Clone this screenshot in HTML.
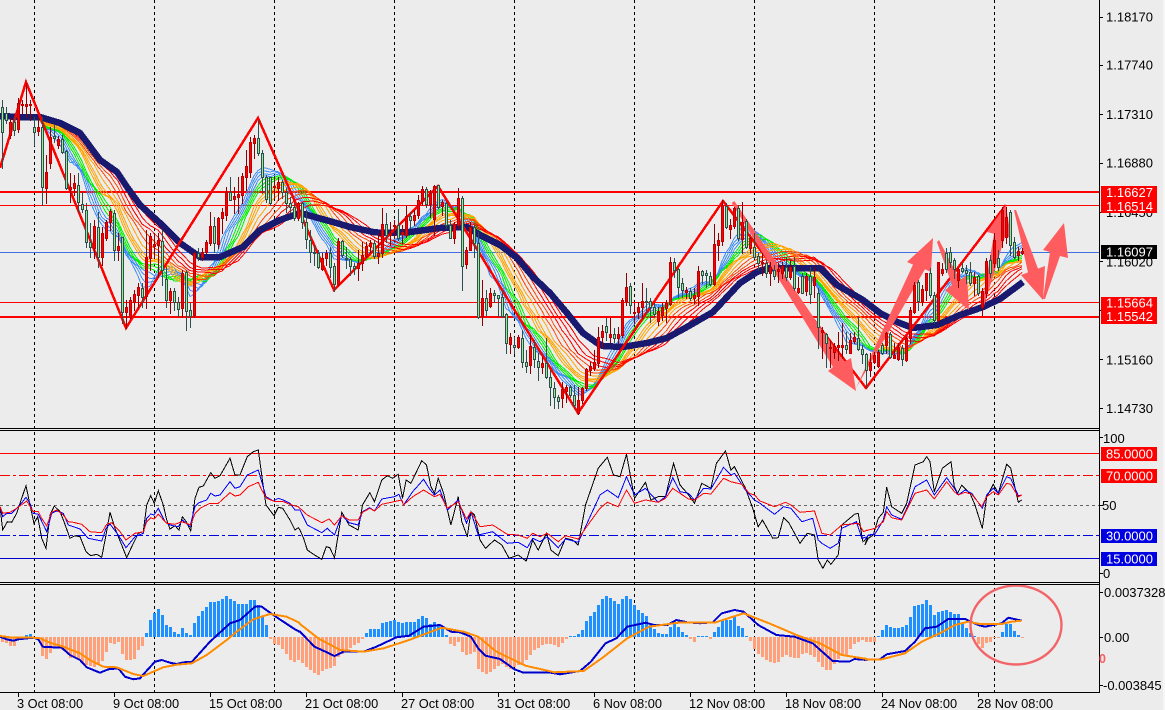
<!DOCTYPE html>
<html><head><meta charset="utf-8"><title>EURUSD chart</title>
<style>
html,body{margin:0;padding:0;background:#ececec;width:1165px;height:710px;overflow:hidden}
svg{display:block;position:absolute;left:0;top:0}
text{font-family:"Liberation Sans",Arial,sans-serif;font-size:13px;fill:#000}
.t{font-size:12.8px}
.w{fill:#fff}
</style></head>
<body>
<svg id="s" width="1165" height="710" viewBox="0 0 1165 710" xmlns="http://www.w3.org/2000/svg">
<rect width="1165" height="710" fill="#ececec"/>
<rect x="1163" width="2" height="710" fill="#f6f6f6"/>
<g id="grid" shape-rendering="crispEdges"></g>
<g id="rib" shape-rendering="crispEdges" fill="none"></g>
<polyline id="zz" fill="none" stroke="#f00" stroke-width="2.5" shape-rendering="crispEdges" points="0,168 26,82 126,328 258,118 334,290 438,186 578,413 723,201 866,388 1006,205"/>
<g fill="#ff5c5f">
<polygon points="731.7,203 734.3,201 844,362 851,358 856,391 828,371 833,367"/>
<polygon points="856,388 913,264.6 907,262 933,238 931,272 925,269.3"/>
<polygon points="937,242 939,240 960,280 967,275 969,310 945,290 952,285"/>
<polygon points="982,306 984,306 1005,236.5 1011,238 1006,205 987,232 994,233.7"/>
<polygon points="1014,210 1016,210 1038,268.6 1045,266 1043,300 1021,275 1028,272.4"/>
<polygon points="1043,299 1045,299 1060,256 1068,258 1064,223 1043,250 1050,252"/>
</g>
<g id="cand" shape-rendering="crispEdges"></g>
<g id="sub" shape-rendering="crispEdges" fill="none"></g>
<g id="hist" shape-rendering="crispEdges"></g>
<g id="macd" shape-rendering="crispEdges" fill="none" stroke-width="2"></g>
<ellipse cx="1016" cy="625" rx="45.5" ry="39.5" fill="none" stroke="#f26468" stroke-width="2.4"/>
<g shape-rendering="crispEdges" fill="#000">
<rect x="1099" y="0" width="1" height="692"/>
<rect x="0" y="692" width="1100" height="1"/>
<rect x="0" y="428" width="1100" height="1"/><rect x="0" y="430" width="1100" height="1"/>
<rect x="0" y="582" width="1100" height="1"/><rect x="0" y="584" width="1100" height="1"/>
</g>
<g id="ticks" shape-rendering="crispEdges" fill="#000"></g>
<text x="1106" y="21.5">1.18170</text>
<text x="1106" y="69.5">1.17740</text>
<text x="1106" y="119">1.17310</text>
<text x="1106" y="167.5">1.16880</text>
<text x="1106" y="217">1.16450</text>
<text x="1106" y="266.5">1.16020</text>
<text x="1106" y="364.5">1.15160</text>
<text x="1106" y="413">1.14730</text>
<g shape-rendering="crispEdges">
<rect x="1101" y="186" width="56" height="27" fill="#f00"/>
<rect x="1101" y="245" width="56" height="14" fill="#000"/>
<rect x="1101" y="297" width="56" height="27" fill="#f00"/>
<rect x="1101" y="447" width="56" height="14" fill="#f00"/>
<rect x="1101" y="469" width="56" height="14" fill="#f00"/>
<rect x="1101" y="529" width="56" height="14" fill="#0000e0"/>
<rect x="1101" y="552" width="56" height="14" fill="#0000e0"/>
</g>
<text class="w" x="1106" y="197">1.16627</text>
<text class="w" x="1106" y="211">1.16514</text>
<text class="w" x="1106" y="256.5">1.16097</text>
<text class="w" x="1106" y="307.5">1.15664</text>
<text class="w" x="1106" y="321">1.15542</text>
<text x="1103" y="443">100</text>
<text class="w" x="1106" y="458.5">85.0000</text>
<text class="w" x="1106" y="480.5">70.0000</text>
<text x="1102" y="510">50</text>
<text class="w" x="1106" y="540.5">30.0000</text>
<text class="w" x="1106" y="563.5">15.0000</text>
<text x="1103" y="578">0</text>
<text x="1104" y="597">0.0037328</text>
<text x="1104" y="642">0.00</text>
<text x="1103" y="690">-0.003845</text>
<text x="1099" y="663" style="font-size:12.5px;font-weight:bold;fill:#f45f5f">0</text>
<text class="t" x="17" y="708">3 Oct 08:00</text>
<text class="t" x="113" y="708">9 Oct 08:00</text>
<text class="t" x="209" y="708">15 Oct 08:00</text>
<text class="t" x="305" y="708">21 Oct 08:00</text>
<text class="t" x="401" y="708">27 Oct 08:00</text>
<text class="t" x="497" y="708">31 Oct 08:00</text>
<text class="t" x="593" y="708">6 Nov 08:00</text>
<text class="t" x="689" y="708">12 Nov 08:00</text>
<text class="t" x="785" y="708">18 Nov 08:00</text>
<text class="t" x="881" y="708">24 Nov 08:00</text>
<text class="t" x="977" y="708">28 Nov 08:00</text>
</svg>
<script>
var $=function(i){return document.getElementById(i)};
function seg(s,x0,y0){return s.trim().split(/\s+/).map(function(c,i){var v=c.slice(1).split(',').map(function(n){return Math.round(n/3+y0)});return {x:x0+4*i,g:c[0]=='g',t:v[0],b:v[1],h:v[2],l:v[3]}})}
var A="g112,185,90,295 g130,150,110,160 r155,195,145,205 g155,180,140,195 r100,178,85,185 r103,105,90,130 r103,107,40,140 r103,105,90,150 g170,185,140,225 r170,182,140,195 g170,350,140,405 r305,355,255,400 r200,280,170,295 g197,205,165,215 r207,225,197,235 g208,245,195,250 g243,355,240,358 r350,357,310,395 r340,355,315,375 g345,395,310,425 g402,418,365,425 g420,515,400,530 g517,530,460,560 r468,533,450,565 g472,562,427,590 r490,562,470,585 r455,505,450,510 r423,457,418,480 g428,540,420,570 r528,540,490,570 g500,725,500,760 r710,725,690,775 r690,740,680,745 r672,695,660,720 r650,675,640,710 g655,680,640,710 r560,678,480,715 r497,565,490,600 r523,527,490,560 r510,525,490,620 g512,600,480,645 g628,690,590,710 r663,690,655,730 g663,695,655,720 g695,717,680,738 r608,715,600,740 g605,722,600,780 g720,737,700,770 r550,735,545,740 g548,562,535,570 r545,562,535,570 r517,545,510,550 r468,518,425,525 g468,520,440,545 r445,522,440,535 r425,445,415,490 r365,435,350,450 g365,390,322,390 r378,388,350,430 r372,380,320,430 r318,375,310,400 r288,320,240,360 r215,305,200,320 r205,218,195,265 g205,250,150,255 g248,320,240,370 g320,388,315,395 g322,400,320,405 r348,352,320,385 r337,353,320,390 g335,365,330,385 g365,400,355,425 g398,412,380,425 g412,445,400,450 r400,443,395,450";
var B="g98,155,95,175 g155,208,120,235 g210,245,180,275 g245,250,225,285 g250,290,240,295 r263,298,250,300 r248,265,240,285 g250,290,230,320 g288,342,280,362 r213,342,205,345 g213,255,210,260 g263,267,232,295 g267,287,260,315 g287,295,280,312 r280,295,240,330 r255,278,215,300 r228,258,215,262 r220,228,210,245 g220,258,210,265 r248,258,190,278 r163,250,115,260 g163,195,130,215 r190,195,155,225 r165,167,150,205 g165,205,118,210 r185,193,165,220 r138,195,108,200 g138,150,125,175 r135,150,120,165 r90,135,75,145 r57,92,48,105 g57,102,50,110 r70,102,60,140 r48,147,45,195 g46,112,45,115 r95,108,90,135 g100,165,95,175 g165,203,150,205 r163,203,155,218 r85,165,55,175 g85,287,78,360 r240,282,232,295 r172,240,155,240 g172,220,165,260 g220,440,185,445 r385,438,330,465 g385,420,360,435 r370,408,355,412 g370,375,360,395 g375,385,375,438 g382,438,360,440 g432,520,430,550 r502,522,490,550 g525,532,500,550 r502,530,495,535 g503,575,480,590 g575,587,540,605 r528,585,495,610 g530,567,510,590 g572,590,550,630 r578,590,560,610 g580,620,505,625 g620,650,600,705 g653,680,635,715 g680,693,675,715 r658,683,635,710 r652,662,645,695 g650,675,645,680 g675,705,645,715 r690,730,650,732 r655,690,650,700 r598,655,595,660 r588,600,575,615 r575,593,540,600 r502,578,470,590";
var C="r422,440,405,470 g408,425,385,450 r432,440,385,455 g433,445,415,455 r432,445,410,460 r330,435,325,440 r290,332,250,345 g288,345,278,370 r365,370,340,400 r352,365,335,385 r332,352,280,385 g332,335,295,370 g332,352,325,395 g352,372,340,380 r362,392,350,405 r352,375,340,390 r340,355,330,395 r217,342,200,345 g217,240,205,260 g238,290,235,320 g280,300,265,320 r300,305,290,325 g303,325,295,330 r315,325,295,340 r243,318,228,345 g243,254,240,280 g250,256,240,290 g258,282,245,285 r162,282,102,285 r150,165,130,210 r45,152,30,165 g47,112,40,115 r105,118,88,145 r55,108,50,115 g55,145,45,150 r95,148,35,190 g92,170,88,175 r145,173,140,190 g170,200,130,205 g198,220,190,240 r215,220,190,255 g218,248,210,260 r230,250,215,285 g240,258,225,268 r238,242,220,275 r228,250,215,265 g230,262,200,270 r230,260,210,268 g228,295,200,300 r295,305,260,310 g258,308,250,310 r258,302,250,315";
var D="g138,192,110,220 r140,165,110,200 g190,290,175,355 r300,305,290,385 g312,338,310,410 r350,355,330,410 r348,365,340,385 r346,350,305,390 r345,350,280,385 g345,358,305,370 r330,368,310,370 r320,332,305,340 g325,358,260,360 g358,372,345,400 g372,420,370,470 r395,420,370,438 r375,395,365,400 r365,408,360,410 g345,370,340,372 r310,345,305,370 g312,382,305,385 r375,385,340,385 r352,388,340,390 g355,388,345,405 r325,390,320,392 r240,325,232,340 r165,245,155,250 g155,212,150,240 r178,212,165,225 r130,180,128,210 g130,195,115,200 g195,270,185,280 r97,270,95,275 r118,128,100,135 g68,118,55,125 g65,95,50,110 g90,118,85,145 r118,150,115,170 g115,122,100,125 g120,128,105,160 g125,160,95,165 r140,160,125,195 g138,188,135,195 r183,230,175,255 r92,190,85,200 g90,129,75,140 r30,100,10,110 g84,111,60,120 r-60,30,-70,50 r-40,20,-70,40 g-54,45,-60,75 g36,81,20,85 r63,75,50,90 r63,69,55,72";
var cs=seg(A,2,70).concat(seg(B,302,170),seg(C,602,190),seg(D,810,230));
function R(x,y,w,h,f){return '<rect x="'+x+'" y="'+y+'" width="'+w+'" height="'+Math.max(h,1)+'" fill="'+f+'"/>'}
function PL(p,c,w,ex){return '<polyline points="'+p.map(function(a){return a[0].toFixed(1)+','+a[1].toFixed(1)}).join(' ')+'" stroke="'+c+'"'+(w?' stroke-width="'+w+'"':'')+(ex||'')+'/>'}
/* grid */
var g='';
[34,154,274,394,514,634,754,874,994].forEach(function(x){g+='<line x1="'+(x+.5)+'" y1="0" x2="'+(x+.5)+'" y2="692" stroke="#000" stroke-dasharray="3 3"/>'});
g+=R(0,191,1099,2,'#f00')+R(0,205,1099,1,'#f00')+R(0,252,1099,1,'#3f6fe0')+R(0,302,1099,1,'#f00')+R(0,316,1099,2,'#f00');
g+=R(0,453,1099,1,'#f00');
g+='<line x1="0" y1="475.5" x2="1099" y2="475.5" stroke="#f00" stroke-dasharray="10 3 3 3"/>';
g+='<line x1="0" y1="505.5" x2="1099" y2="505.5" stroke="#666" stroke-dasharray="3 3"/>';
g+='<line x1="0" y1="535.5" x2="1099" y2="535.5" stroke="#0000e0" stroke-dasharray="10 3 3 3"/>';
g+=R(0,558,1099,1,'#0000d0');
$('grid').innerHTML=g;
/* ribbon: moving averages of closes */
var per=[[8,'#3f8ff5'],[9,'#3f8ff5'],[10,'#3f8ff5'],[11,'#3f8ff5'],[12,'#00f000'],[13,'#00f000'],[14,'#00f000'],[16,'#ffa500'],[17,'#ffa500'],[18,'#ffa500'],[20,'#ffa500'],[22,'#ff4500'],[24,'#ff4500'],[26,'#f00'],[28,'#f00'],[30,'#f00']];
var closes=[];for(var q=0;q<40;q++)closes.push(115);
cs.forEach(function(c){closes.push(c.g?c.b:c.t)});
var r='';
per.forEach(function(pc){var P=pc[0],p=[];cs.forEach(function(c,i){var s=0;for(var n=0;n<P;n++)s+=closes[i+40-n];p.push([c.x,s/P])});r+=PL(p,pc[1],1)});
var navy=[[0,116],[20,117],[40,117],[60,123],[80,133],[100,160],[117,172],[127,187],[140,205],[160,223],[180,243],[200,257],[220,257],[243,247],[260,230],[280,220],[300,213],[333,222],[350,227],[373,232],[383,233],[410,232],[440,228],[467,227],[480,235],[500,245],[517,258],[533,277],[550,293],[567,313],[583,333],[597,343],[603,346],[623,347],[647,343],[667,338],[687,327],[713,312],[727,297],[740,283],[757,272],[770,268],[810,268],[820,268],[837,285],[863,300],[880,313],[897,322],[913,328],[937,325],[960,315],[983,307],[1000,299],[1023,282]];
r+=PL(navy,'#191970',6.5,' stroke-linejoin="round"');
$('rib').innerHTML=r;
/* candles */
var c='';
cs.forEach(function(k){var w=k.g?'#2f4f4f':'#8b0000';
c+=R(k.x,k.h,1,k.l-k.h+1,w);
c+=R(k.x-1,k.t,3,k.b-k.t+1,k.g?'#2f4f4f':'#c00000');
if(k.b-k.t>1)c+=R(k.x,k.t+1,1,k.b-k.t-1,k.g?'#90ee90':'#ff0000');
});
$('cand').innerHTML=c;
/* sub-window lines */
function mp(a,x0,y0,sx,sy){var o=[];for(var i=0;i<a.length;i+=2)o.push([a[i]/sx+x0,a[i+1]/sy+y0]);return o}
function j3(a,b,d){return mp(a,0,425,3,3).concat(mp(b,300,425,2.75,3),mp(d,865,425,3,3))}
var bk=j3([0,245,8,315,22,290,35,292,50,265,65,220,78,182,90,240,102,295,113,275,125,340,138,370,150,270,163,243,180,260,192,290,210,340,225,332,240,335,258,380,272,392,290,388,305,397,318,330,330,262,345,310,365,360,380,398,400,355,415,325,430,320,440,240,452,212,463,235,475,197,490,240,500,285,510,312,525,302,537,315,547,275,560,292,572,318,585,220,597,187,610,183,632,143,645,160,660,152,690,100,705,150,720,150,742,95,760,80,775,75,785,150,798,240,822,272,835,247,848,250,870,285,885,315,895,308],
[0,315,10,340,20,375,40,390,60,403,72,365,82,368,95,398,115,262,135,300,160,315,172,240,192,203,205,230,225,165,240,152,255,160,270,148,282,220,292,165,305,175,335,107,348,120,360,185,370,205,380,160,395,205,415,300,435,215,445,290,460,335,470,260,480,270,495,345,510,370,535,345,555,360,575,400,600,390,622,408,640,345,655,375,678,325,690,375,710,392,730,340,750,345,765,360,785,240,820,130,845,97,862,150,880,155,898,88,920,220,950,172,965,225,985,215,1005,215,1027,115,1045,180,1065,205,1085,235,1105,175,1130,190,1145,115,1170,78,1185,135,1195,125,1225,190,1245,250,1260,305,1272,285,1300,340,1315,338,1330,278,1345,295,1375,355,1395,325,1415,330,1425,405,1438,430,1450,405,1460,418,1480,390,1490,300,1525,268,1535,265,1548,350,1560,340],
[0,360,10,340,25,330,40,280,55,262,65,187,80,245,110,265,125,235,150,120,175,110,185,95,195,110,208,200,232,130,258,110,268,185,278,205,290,180,315,205,330,240,352,310,365,215,385,178,400,205,425,118,437,130,460,232,470,225]);
var bl=j3([0,245,8,275,20,265,35,265,60,240,78,217,90,235,100,265,115,268,128,295,140,320,155,265,170,258,190,265,205,300,220,305,240,312,265,340,290,345,305,348,318,310,330,297,355,330,378,368,405,335,430,325,440,280,452,267,462,270,475,250,495,290,510,300,535,305,547,285,570,305,585,245,597,233,620,225,632,205,645,213,660,210,690,170,705,190,720,185,742,150,775,135,785,170,798,215,820,228,835,220,850,225,870,235,885,255,895,255],
[0,255,20,300,60,323,75,310,95,330,115,270,135,293,160,300,172,260,192,248,205,258,225,222,260,215,272,208,285,240,310,200,340,163,355,190,370,210,385,195,405,255,435,225,458,295,470,260,490,330,530,320,570,355,600,352,625,368,640,340,660,350,680,335,710,368,730,342,765,352,785,305,825,210,845,195,875,218,898,155,920,210,950,190,985,232,1005,215,1025,158,1045,200,1068,205,1085,225,1110,190,1130,192,1165,127,1185,150,1195,145,1225,195,1250,225,1265,235,1305,268,1330,245,1350,250,1380,290,1410,280,1425,345,1435,355,1458,370,1480,355,1490,310,1530,290,1545,340,1560,335],
[0,345,10,330,30,327,55,285,65,245,80,270,110,283,130,240,150,185,185,165,208,210,245,158,268,190,280,210,300,195,320,205,352,250,365,210,385,190,400,205,425,155,437,160,460,212,470,210]);
var rd=j3([0,245,8,265,30,262,50,250,80,228,100,260,115,260,125,280,140,303,155,262,170,255,190,270,205,290,220,292,245,298,270,320,305,323,320,298,335,293,360,320,378,345,405,325,430,320,440,290,452,278,462,282,475,268,500,295,525,298,545,290,572,300,585,265,600,250,630,235,655,235,690,203,705,213,720,210,745,185,775,172,785,195,800,220,825,230,850,230,875,240,895,245],
[0,250,20,270,60,293,80,282,95,300,115,272,135,285,160,285,172,262,192,250,205,258,225,238,280,225,285,240,310,215,340,195,370,215,385,208,405,250,435,230,458,282,470,260,495,305,530,300,570,328,600,330,625,340,640,325,660,335,680,325,710,350,730,332,765,342,785,310,825,250,845,232,875,245,898,195,920,235,950,225,985,232,1005,220,1025,190,1045,205,1068,222,1085,225,1110,205,1130,207,1165,160,1185,170,1215,178,1235,205,1250,210,1265,228,1305,245,1335,232,1350,240,1375,262,1415,258,1435,325,1458,330,1490,300,1535,295,1550,320,1560,315],
[0,318,30,310,55,290,65,260,80,278,110,285,130,245,150,205,185,195,208,222,245,170,268,200,280,210,300,202,320,208,350,245,365,215,385,200,400,210,425,175,437,178,460,215,470,210]);
$('sub').innerHTML=PL(bk,'#000',1)+PL(bl,'#0000ff',1)+PL(rd,'#f00',1);
/* histogram */
var H1=[-14,-18,-26,-27,-8,0,5,9,0,-2,-57,-65,-48,-30,-30,-40,-45,-62,-60,-65,-75,-85,-88,-90,-80,-73,-45,-18,-20,-15,-50,-69,-69,-66,-40,-28,12,50,72,85,67,35,30,15,8,27,13,5,42,63,78,90,105,105,108,115,122,115,108,100,100,100,110,110,95,60,37,-6,-20,-25,-35,-50,-70,-75,-70];
var H2=[-78,-90,-100,-107,-113,-103,-95,-92,-88,-60,-50,-42,-32,-25,-18,-6,12,23,23,23,42,45,47,52,46,42,46,46,46,53,62,57,38,44,38,30,6,-22,-26,-15,-45,-53,-50,-45,-95,-105,-112,-105,-95,-88,-82,-90,-95,-90,-85,-80,-70,-55,-40,-32,-25,-22,-22,-25,-30,-18,-6,2,3,8,20,48,62,75,97,115,122,118,108,100,113,122,115,95,82,72,62,35,25,13,10,10,30,38,30,15,5,-6,-15,2,3,3,-5,15,30,50,52,52,60,32,27,2,-12,-35,-50,-60,-70,-75,-77,-75,-60,-55,-60,-62,-62,-50,-48,-55,-60,-75,-90,-98,-100,-80,-65,-55,-55,-35,-20,-15,-10,-15];
var H3=[-15,-15,2,22,35,30,28,28,30,35,60,92,97,100,110,95,65,75,78,82,75,70,68,40,28,12,3,-20,-32,-17,-14,-2,-2,14,38,38,18,5,-3];
var h='';
function hb(a,x0){a.forEach(function(v,i){if(!v)return;var x=x0+4*i-1,n=Math.max(Math.round(Math.abs(v)/3),1);h+=v>0?R(x,637-n,3,n,'#1e90ff'):R(x,637,3,n,'#ffa07a')})}
hb(H1,2);hb(H2,302);hb(H3,870);
$('hist').innerHTML=h;
/* macd lines */
var mb=j3([0,170,20,178,40,182,55,178,100,173,115,178,128,200,160,202,185,203,210,225,240,240,260,262,280,270,300,278,325,268,355,265,375,290,400,298,420,295,440,272,465,245,485,240,510,248,530,252,550,247,575,246,630,185,690,130,720,120,765,80,785,80,820,105,880,145,898,155].map(function(v,i){return i%2?v-(425-580)*3:v}),
[0,620,40,665,70,680,95,693,120,680,175,680,210,665,265,637,300,632,340,605,385,600,415,620,440,622,470,635,490,670,510,692,550,702,590,733,615,743,690,743,715,748,770,738,800,710,840,655,870,640,900,605,950,593,975,600,1010,600,1035,585,1065,592,1100,595,1135,592,1160,565,1195,555,1220,560,1260,600,1310,630,1360,635,1410,655,1465,708,1510,710,1525,702,1560,705],
[0,703,45,703,65,688,120,678,150,650,180,610,215,605,250,582,300,582,340,600,360,605,410,595,430,578,470,587]);
var mo=j3([0,168,30,172,100,173,120,175,150,188,190,200,240,220,270,240,310,260,350,262,400,282,430,288,490,262,530,254,575,250,620,225,680,180,710,155,760,118,810,102,860,110,898,128].map(function(v,i){return i%2?v-(425-580)*3:v}),
[0,597,50,640,110,675,175,680,230,670,300,645,390,608,450,620,490,635,540,680,620,722,700,742,780,738,830,700,900,640,960,605,1040,593,1140,593,1220,565,1290,595,1370,632,1430,655,1490,690,1560,702],
[0,703,50,703,120,685,170,650,230,622,270,600,310,590,345,597,410,597,440,590,470,587]);
$('macd').innerHTML=PL(mb,'#0000cd',2)+PL(mo,'#ff8c00',2);
/* ticks */
var t='';
[17,65,114,163,212,261,310,359,408].forEach(function(y){t+=R(1100,y,3,1,'#000')});
[437,505,573,592,637,685].forEach(function(y){t+=R(1100,y,3,1,'#000')});
for(var x=18;x<1000;x+=96)t+=R(x,693,1,4,'#000');
$('ticks').innerHTML=t;
</script>
</body></html>
